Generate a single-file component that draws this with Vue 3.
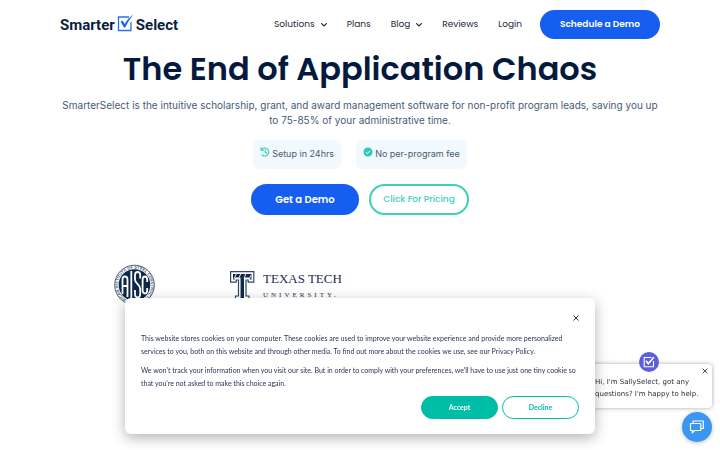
<script setup>
const links = [
  { label: 'Solutions', menu: true },
  { label: 'Plans' },
  { label: 'Blog', menu: true },
  { label: 'Reviews' },
  { label: 'Login' },
]
</script>

<template>
  <div class="page">
    <header class="header">
      <a class="logo" href="#" aria-label="SmarterSelect">
        <span>Smarter</span>
        <svg width="17" height="18" viewBox="0 0 17 18" aria-hidden="true">
          <path d="M12 3H1.500v13.500h12.500V8" fill="none" stroke="#2f6fe4" stroke-width="1.300" />
          <path d="M3.500 7.500l2.200-.8 2.100 3.300C9.600 6.500 12 3.200 16.500.5 13 4.500 10.500 8.700 8.300 13.500H7z" fill="#1d62f0" />
        </svg>
        <span>Select</span>
      </a>
      <nav class="nav">
        <a v-for="link in links" :key="link.label" href="#">
          {{ link.label }}
          <svg v-if="link.menu" width="6" height="4" viewBox="0 0 6 4" aria-hidden="true">
            <path d="M.6.600L3 3 5.400.6" fill="none" stroke="#23293a" stroke-width="1.200" stroke-linecap="round" />
          </svg>
        </a>
      </nav>
      <button class="pill schedule" type="button">Schedule a Demo</button>
    </header>

    <main class="hero">
      <h1>The End of Application Chaos</h1>
      <p class="lead">
        SmarterSelect is the intuitive scholarship, grant, and award management software for non-profit program leads, saving you up to 75-85% of your administrative time.
      </p>
      <ul class="badges">
        <li>
          <svg width="10" height="10" viewBox="0 0 10 10" aria-hidden="true">
            <path d="M1.400 2.800A4 4 0 1 1 2 8M1 .8v2.500h2.500M5.200 2.800V5.200l1.600 1.200" fill="none" stroke="#35cdb8" stroke-width="1.100" stroke-linecap="round" stroke-linejoin="round" />
          </svg>
          <span>Setup in 24hrs</span>
        </li>
        <li>
          <svg width="10" height="10" viewBox="0 0 10 10" aria-hidden="true">
            <circle cx="5" cy="5" r="4.500" fill="#2dcbb5" />
            <path d="M2.900 5.100l1.500 1.500 2.700-2.900" fill="none" stroke="#fff" stroke-width="1" />
          </svg>
          <span>No per-program fee</span>
        </li>
      </ul>
      <div class="actions">
        <button class="pill demo" type="button">Get a Demo</button>
        <button class="pill pricing" type="button">Click For Pricing</button>
      </div>
    </main>

    <section class="clients" aria-label="Clients">
      <svg class="aisc" width="42" height="42" viewBox="0 0 42 42" role="img" aria-label="AISC">
        <defs><path id="ring" d="M20.500 37.500a16.500 16.500 0 1 1 .1 0" /></defs>
        <circle cx="20.500" cy="21" r="19.800" fill="#fff" stroke="#213854" stroke-width=".8" />
        <text class="ring-text"><textPath href="#ring">AMERICAN INSTITUTE OF STEEL CONSTRUCTION</textPath></text>
        <circle cx="20.500" cy="21" r="15.800" fill="#0d2747" />
        <g fill="none" stroke="#fff" stroke-width="1.800">
          <path d="M8.500 30V15.500q0-3 2.500-3t2.500 3V33M8.500 22h5M17.300 7v28M26.200 14.500V11q0-3-2.600-3T21 11v4.500c0 4 5.200 5 5.200 9.500v5q0 3.500-2.600 3.500T21 30v-4M33.200 18v-2q0-3.500-2.300-3.500t-2.300 3.500v10q0 3.500 2.300 3.500t2.300-3.500v-2" />
        </g>
      </svg>
      <div class="ttu">
        <svg width="26" height="34" viewBox="0 0 26 34" role="img" aria-label="Texas Tech">
          <path d="M1.600 1.600h23.200v10.600h-5.600V10H17v16h3v7H6.500v-7h3V10H7.200v2.200H1.600z" fill="#fff" stroke="#314867" stroke-width="1.200" />
          <path d="M4 4h18.500v5.500h-1.700V7.500H15V28h2.500v3H9v-3h2.500V7.500H5.700v2H4z" fill="#10294b" />
          <path d="M5 9l2.500-5.500M9.500 8.500L12 3.500M15 8.500L17 3.500M20.500 9L22 5" stroke="#dce3ea" stroke-width="1" />
          <path d="M11.500 10v18" stroke="#8fa0b5" stroke-width="1" />
        </svg>
        <div class="ttu-name">
          <span>TEXAS TECH</span>
          <small>UNIVERSITY.</small>
        </div>
      </div>
    </section>

    <aside class="greeting">
      <div class="avatar">
        <svg width="12" height="12" viewBox="0 0 12 12" aria-hidden="true">
          <path d="M8.500 1.500H1.200v9.300h9.300V5" fill="none" stroke="#fff" stroke-width="1.100" />
          <path d="M3 4.800l2.300 3L10.800 1.200" fill="none" stroke="#fff" stroke-width="1.600" />
        </svg>
      </div>
      <button class="close" type="button" aria-label="Close chat greeting">
        <svg width="6" height="6" viewBox="0 0 6 6"><path d="M.5.500l5 5M5.500.500l-5 5" stroke="#3c4149" stroke-width=".9" /></svg>
      </button>
      <p>Hi, I'm SallySelect, got any questions? I'm happy to help.</p>
    </aside>
    <button class="chat" type="button" aria-label="Open chat">
      <svg width="16" height="16" viewBox="0 0 16 16">
        <path d="M1.500 4.500h10.300v7H5.500L3.300 13.800v-2.300H1.500zM4 4.300V2h10.300v7.500h-2.300" fill="none" stroke="#fff" stroke-width="1.200" stroke-linejoin="round" />
      </svg>
    </button>

    <div class="cookies" role="dialog" aria-label="Cookie notice">
      <button class="close" type="button" aria-label="Close cookie notice">
        <svg width="6" height="6" viewBox="0 0 6 6"><path d="M.5.500l5 5M5.500.500l-5 5" stroke="#272c3a" stroke-width="1" /></svg>
      </button>
      <p>This website stores cookies on your computer. These cookies are used to improve your website experience and provide more personalized services to you, both on this website and through other media. To find out more about the cookies we use, see our Privacy Policy.</p>
      <p>We won't track your information when you visit our site. But in order to comply with your preferences, we'll have to use just one tiny cookie so that you're not asked to make this choice again.</p>
      <div class="choices">
        <button class="accept" type="button">Accept</button>
        <button class="decline" type="button">Decline</button>
      </div>
    </div>
  </div>
</template>

<style>
body {
  background: #fff;
}
</style>

<style scoped>
.page {
  font-family: Poppins, Inter, sans-serif;
  color: #03193d;
}
* {
  box-sizing: border-box;
}
button {
  padding: 0;
  border: 0;
  font-family: inherit;
  cursor: pointer;
}
a {
  color: inherit;
  text-decoration: none;
}
svg {
  display: block;
  flex: none;
}
.header {
  display: flex;
  align-items: center;
  padding: 10px 60px 0;
}
.logo {
  display: flex;
  align-items: center;
  gap: 2px;
  margin-right: auto;
  font: bold 15px/22px Roboto, "Liberation Sans", sans-serif;
  color: #0a1f40;
}
.logo svg {
  margin-bottom: 4px;
}
.nav {
  display: flex;
  gap: 20px;
  margin-right: 18px;
  font-size: 9px;
  color: #23293a;
}
.nav a {
  display: flex;
  align-items: center;
  gap: 6px;
}
.pill {
  border-radius: 16px;
  background: #155eef;
  color: #fff;
  font-weight: 600;
}
.schedule {
  width: 120px;
  height: 29px;
  font-size: 9px;
}
.hero {
  padding: 8px 60px 0;
  text-align: center;
}
h1 {
  margin: 0;
  font-size: 32px;
  line-height: 44px;
  font-weight: 600;
}
.lead {
  margin: 7px 0 0;
  font: 10px/15px Inter, sans-serif;
  color: #475b75;
}
.badges {
  display: flex;
  justify-content: center;
  gap: 15px;
  margin: 12px 0 0;
  padding: 0;
  list-style: none;
  font: 9px/13px Inter, sans-serif;
  color: #475b75;
}
.badges li {
  display: flex;
  gap: 2px;
  padding: 7px 7px 9px;
  border-radius: 6px;
  background: #f2f9fe;
}
.actions {
  display: flex;
  justify-content: center;
  gap: 10px;
  margin-top: 15px;
}
.demo {
  width: 108px;
  height: 31px;
  font-size: 10px;
}
.pricing {
  width: 100px;
  height: 31px;
  border: 2px solid #40cfbb;
  background: #fff;
  color: #40cfbb;
  font-size: 9px;
  font-weight: 500;
}
.clients {
  display: flex;
  gap: 73px;
  padding: 49px 114px 0;
}
.ring-text {
  font: bold 4px "Liberation Sans", sans-serif;
  fill: #4b6078;
}
.ttu {
  display: flex;
  gap: 8px;
  padding-top: 6px;
}
.ttu-name {
  display: flex;
  flex-direction: column;
  font-family: "Liberation Serif", serif;
  font-size: 13px;
  line-height: 18px;
  color: #1b2e4d;
}
.ttu-name small {
  font-size: 7px;
  line-height: 14px;
  letter-spacing: 3px;
}
.close {
  display: block;
  margin-left: auto;
  background: none;
}
.greeting {
  position: fixed;
  right: 8px;
  bottom: 42px;
  width: 133px;
  height: 44px;
  padding: 4px 4px 0 16px;
  border-radius: 4px;
  background: #fff;
  box-shadow: 0 0 4px rgba(0, 0, 0, 0.35);
  font: 7px/12px "DejaVu Sans", sans-serif;
  color: #27303b;
}
.greeting p {
  margin: 2px 0 0;
}
.avatar {
  position: absolute;
  top: -12px;
  left: 60px;
  display: grid;
  place-items: center;
  width: 20px;
  height: 20px;
  border-radius: 50%;
  background: #5c5fdc;
}
.chat {
  position: fixed;
  right: 8px;
  bottom: 8px;
  display: grid;
  place-items: center;
  width: 30px;
  height: 30px;
  border-radius: 50%;
  background: #3a96f1;
  box-shadow: 0 1px 4px rgba(0, 0, 0, 0.25);
}
.cookies {
  position: fixed;
  left: 125px;
  right: 125px;
  bottom: 16px;
  padding: 17px 16px 15px;
  border-radius: 6px;
  background: #fff;
  box-shadow: 0 4px 14px rgba(0, 0, 0, 0.3);
  font: 7px/13px Lato, sans-serif;
  color: #2b3558;
}
.cookies p {
  margin: 0 0 6px;
}
.cookies .close + p {
  margin-top: 11px;
}
.choices {
  display: flex;
  justify-content: flex-end;
  gap: 4px;
}
.choices button {
  width: 77px;
  height: 23px;
  padding-bottom: 2px;
  border: 1px solid #00bda5;
  border-radius: 12px;
  font-size: 7px;
  font-weight: 700;
}
.accept {
  background: #00bda5;
  color: #fff;
}
.decline {
  background: #fff;
  color: #00bda5;
}
</style>
